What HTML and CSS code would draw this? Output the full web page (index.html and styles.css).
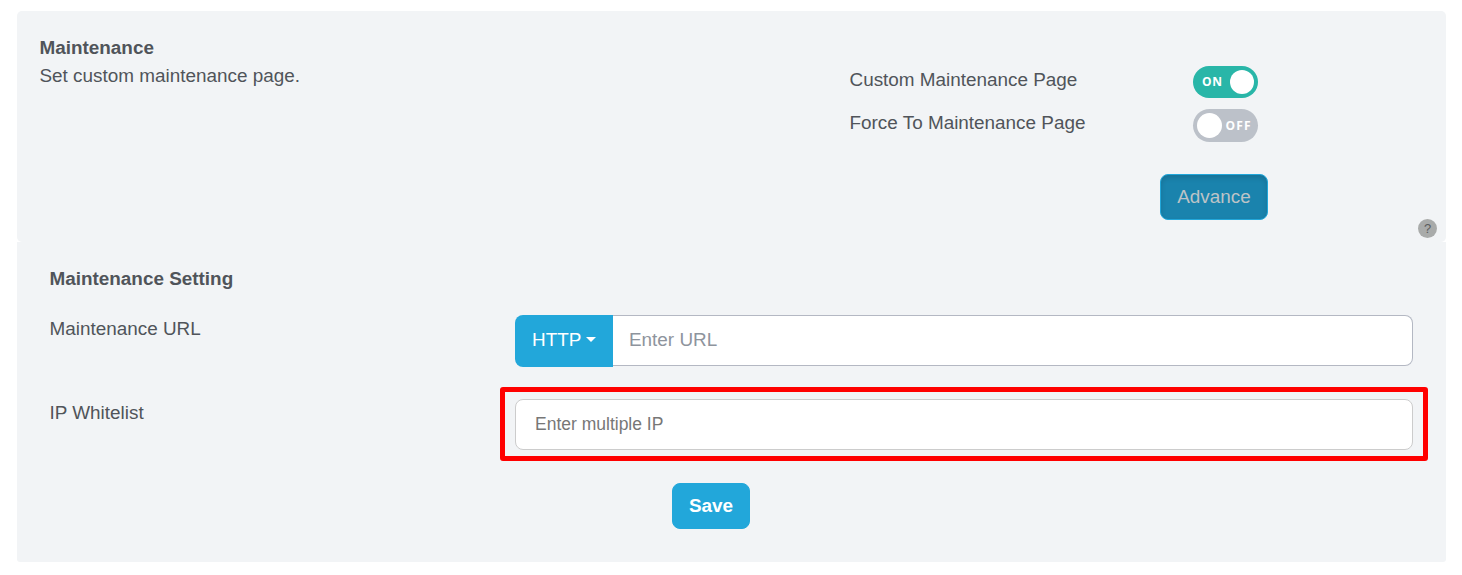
FILE: index.html
```html
<!DOCTYPE html>
<html lang="en">
<head>
<meta charset="utf-8">
<title>Maintenance</title>
<link rel="stylesheet" href="styles.css">
</head>
<body>
<main class="page">
  <section class="card summary">
    <div class="intro">
      <h2 class="title">Maintenance</h2>
      <p class="text">Set custom maintenance page.</p>
    </div>
    <div class="controls">
      <div class="option">
        <span class="label">Custom Maintenance Page</span>
        <span class="switch on"><span class="state">ON</span><span class="knob"></span></span>
      </div>
      <div class="option">
        <span class="label force">Force To Maintenance Page</span>
        <span class="switch off"><span class="knob"></span><span class="state">OFF</span></span>
      </div>
      <button class="btn advance" type="button">Advance</button>
    </div>
    <span class="help">?</span>
  </section>
  <section class="card settings">
    <h2 class="title">Maintenance Setting</h2>
    <div class="row">
      <span class="label">Maintenance URL</span>
      <div class="group">
        <button class="protocol" type="button"><span class="http">HTTP</span><svg class="caret" viewBox="0 0 10 5"><path d="M0 0h10L5 5z" fill="#fff"/></svg></button>
        <input class="field url" type="text" placeholder="Enter URL">
      </div>
    </div>
    <div class="row whitelist">
      <span class="label">IP Whitelist</span>
      <div class="highlight"><input class="field ip" type="text" placeholder="Enter multiple IP"></div>
    </div>
    <button class="btn save" type="button">Save</button>
  </section>
</main>
</body>
</html>
```
FILE: styles.css
```css
* { box-sizing: border-box; }
body {
  margin: 0;
  background: #fff;
  color: #50545a;
  font-family: "Liberation Sans", Arial, sans-serif;
  font-size: 18.9px;
  line-height: 28px;
}
.page { padding: 11px 16px 0 17px; }
.card { background: #f2f4f6; }
.title, .text { margin: 0; }
.title { font-size: 18.9px; font-weight: 700; line-height: 28px; }
.summary {
  position: relative;
  display: grid;
  grid-template-columns: 810px 1fr;
  height: 231px;
  padding: 23px 22px 0 22.5px;
  border-radius: 5px;
}
.controls { padding-top: 32px; }
.option {
  display: grid;
  grid-template-columns: 343.5px 65px;
  height: 43px;
}
.option .label { line-height: 27px; }
.switch {
  display: flex;
  align-items: center;
  height: 32px;
  border-radius: 17px;
  color: #fff;
  font: 700 12px/32px "Open Sans", sans-serif;
  letter-spacing: .7px;
}
.on { background: #29b6a8; padding-left: 9px; justify-content: space-between; padding-right: 4px; }
.off { background: #bcc1c9; height: 33px; padding-left: 4px; gap: 3.5px; letter-spacing: 1.2px; }
.knob { width: 24px; height: 24px; border-radius: 50%; background: #fff; flex: none; }
.off .knob { width: 25px; height: 25px; }
.btn {
  display: block;
  border: 1px solid #22a7da;
  border-radius: 8px;
  font: 18.9px/24px "Liberation Sans", Arial, sans-serif;
  padding: 0;
}
.advance {
  width: 108px;
  height: 46px;
  margin: 22px 0 0 310.5px;
  background: #1a83ad;
  color: #bdc3c7;
  box-shadow: inset 0 3px 5px rgba(0, 0, 0, .125);
}
.help {
  position: absolute;
  right: 9px;
  bottom: 4px;
  width: 19px;
  height: 19px;
  border-radius: 50%;
  background: #a9abaa;
  color: #5b5d5e;
  font-size: 13px;
  line-height: 20px;
  text-align: center;
}
.settings { height: 320px; padding: 23px 18px 0 32.5px; border-radius: 0 0 3px 3px; }
.row { display: grid; grid-template-columns: 450.5px 1fr; }
.settings .title + .row { margin-top: 22px; }
.group { display: flex; padding: 0 15px; height: 52px; }
.protocol {
  display: flex;
  align-items: center;
  gap: 5px;
  width: 98px;
  height: 52px;
  padding: 0 0 3px 17px;
  border: 0;
  border-radius: 8px 0 0 8px;
  background: #22a7da;
  color: #fff;
  font: 18.9px/24px "Liberation Sans", Arial, sans-serif;
}
.caret { width: 10px; height: 5px; }
.field {
  width: 100%;
  height: 51px;
  background: #fff;
  border: 1px solid #b4b8c3;
  border-radius: 8px;
  outline: 0;
  font-family: "Liberation Sans", Arial, sans-serif;
}
.url { flex: 1; width: auto; border-left: 0; border-radius: 0 8px 8px 0; padding: 0 16px 2px; font-size: 18.9px; }
.url::placeholder { color: #8e949d; opacity: 1; }
.whitelist { margin-top: 20px; }
.whitelist .label { padding-top: 12px; }
.highlight { width: 928px; height: 74px; border: 5px solid #f00; border-radius: 3px; padding: 7px 10px; }
.ip { border-color: #ccc; padding: 0 19px 1px; font-size: 17.5px; }
.ip::placeholder { color: #777; opacity: 1; }
.save { width: 78px; height: 46px; margin: 22px 0 0 622.5px; background: #22a7da; color: #fff; font-weight: 700; }
```
